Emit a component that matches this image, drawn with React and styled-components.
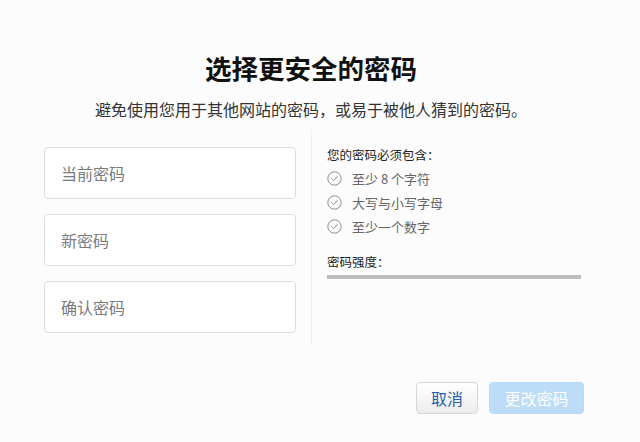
import React from 'react';
import styled, { createGlobalStyle } from 'styled-components';

const GlobalStyle = createGlobalStyle`
  html, body {
    margin: 0;
    padding: 0;
    background: #fcfcfc;
  }
  body {
    font-family: 'Noto Sans CJK SC', 'Noto Sans', sans-serif;
    color: #222;
  }
  * { box-sizing: border-box; }
`;

const Page = styled.div`
  width: 640px;
  height: 442px;
  padding-top: 52px;
  display: flex;
  flex-direction: column;
`;

const Header = styled.header`
  width: 622px;
  display: flex;
  flex-direction: column;
  align-items: center;
`;

const Title = styled.h1`
  margin: 0;
  font-size: 26.5px;
  line-height: 32px;
  font-weight: 700;
  color: #111;
`;

const Subtitle = styled.p`
  margin: 14px 0 0;
  font-size: 16px;
  line-height: 22px;
  color: #333;
  white-space: nowrap;
`;

const Main = styled.div`
  margin-top: 27px;
  width: 100%;
  padding-left: 44px;
  display: flex;
  gap: 15px;
`;

const Fields = styled.div`
  width: 252px;
  display: flex;
  flex-direction: column;
  gap: 15px;
`;

const Field = styled.input`
  width: 100%;
  height: 52px;
  padding: 0 16px;
  border: 1px solid #dcdcdc;
  border-radius: 4px;
  background: #fff;
  font-family: inherit;
  font-size: 16px;
  color: #333;
  outline: none;
  &::placeholder {
    color: #7a7a7a;
  }
`;

const Divider = styled.div`
  width: 1px;
  margin: -17px 0 -12px;
  background: #f1f1f1;
`;

const Rules = styled.div`
  width: 254px;
  display: flex;
  flex-direction: column;
`;

const RulesHeading = styled.div`
  margin-top: -1px;
  font-size: 12.5px;
  line-height: 18px;
  color: #222;
`;

const RuleList = styled.ul`
  list-style: none;
  margin: 2px 0 0;
  padding: 0;
`;

const Rule = styled.li`
  display: flex;
  align-items: center;
  gap: 10px;
  height: 24px;
  font-size: 13px;
  color: #666;
`;

const StrengthLabel = styled.div`
  margin-top: 15px;
  font-size: 12.5px;
  line-height: 18px;
  color: #222;
`;

const StrengthBar = styled.div`
  margin-top: 4px;
  height: 4px;
  width: 254px;
  background: #bdbdbd;
`;

const Actions = styled.div`
  margin-top: 49px;
  width: 100%;
  padding-right: 56px;
  display: flex;
  justify-content: flex-end;
  gap: 11px;
`;

const Button = styled.button`
  height: 32px;
  padding: 0 ${(p) => (p.$primary ? '14.5px' : '14px')};
  border-radius: 4px;
  font-family: inherit;
  font-size: 16px;
  cursor: pointer;
  border: 1px solid ${(p) => (p.$primary ? '#b7d8f6' : '#d6d6d6')};
  background: ${(p) =>
    p.$primary ? '#bcdcf8' : 'linear-gradient(#ffffff, #ececec)'};
  color: ${(p) => (p.$primary ? '#ffffff' : '#1f5fae')};
`;

const CheckIcon = () => (
  <svg width="15" height="15" viewBox="0 0 15 15" fill="none">
    <circle cx="7.5" cy="7.5" r="6.7" stroke="#8f8f8f" strokeWidth="1" />
    <path d="M4.8 7.7 L6.8 9.6 L10.3 5.6" stroke="#8f8f8f" strokeWidth="1" strokeLinecap="round" strokeLinejoin="round" />
  </svg>
);

const rules = ['至少 8 个字符', '大写与小写字母', '至少一个数字'];

export default function App() {
  return (
    <>
      <GlobalStyle />
      <Page>
        <Header>
          <Title>选择更安全的密码</Title>
          <Subtitle>避免使用您用于其他网站的密码，或易于被他人猜到的密码。</Subtitle>
        </Header>
        <Main>
          <Fields>
            <Field type="password" placeholder="当前密码" />
            <Field type="password" placeholder="新密码" />
            <Field type="password" placeholder="确认密码" />
          </Fields>
          <Divider />
          <Rules>
            <RulesHeading>您的密码必须包含：</RulesHeading>
            <RuleList>
              {rules.map((r) => (
                <Rule key={r}>
                  <CheckIcon />
                  {r}
                </Rule>
              ))}
            </RuleList>
            <StrengthLabel>密码强度：</StrengthLabel>
            <StrengthBar />
          </Rules>
        </Main>
        <Actions>
          <Button>取消</Button>
          <Button $primary disabled>更改密码</Button>
        </Actions>
      </Page>
    </>
  );
}
